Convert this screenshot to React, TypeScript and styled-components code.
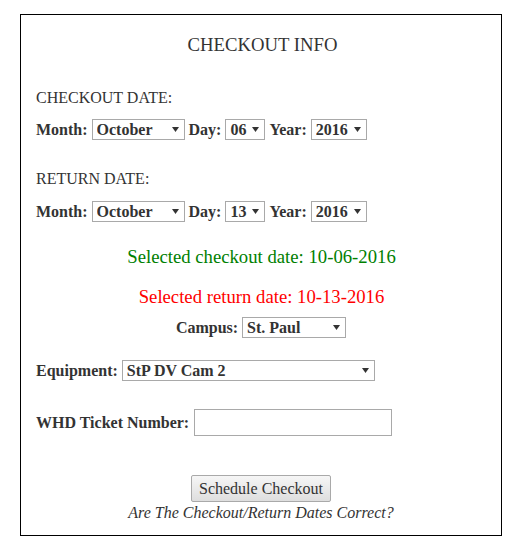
import React from "react";
import styled, { createGlobalStyle } from "styled-components";

const Global = createGlobalStyle`
  html, body { margin: 0; padding: 0; background: #fff; }
  body { font-family: "Liberation Serif", "Times New Roman", serif; color: #333; }
`;

const Box = styled.div`
  box-sizing: border-box;
  width: 482px;
  height: 522px;
  margin: 14px 0 0 20px;
  border: 1px solid #000;
  padding: 0 15px 13px;
  display: flex;
  flex-direction: column;
`;

const Title = styled.h3`
  margin: 19px 0 0;
  font-size: 18.72px;
  line-height: 22px;
  font-weight: normal;
  text-align: center;
  padding-left: 3px;
`;

const SectionLabel = styled.div<{ $mt: number }>`
  margin-top: ${(p) => p.$mt}px;
  font-size: 16px;
  line-height: 18px;
`;

const Row = styled.div<{ $mt: number; $center?: boolean }>`
  margin-top: ${(p) => p.$mt}px;
  display: flex;
  align-items: center;
  justify-content: ${(p) => (p.$center ? "center" : "flex-start")};
  gap: 4px;
  font-size: 16px;
`;

const Label = styled.label`
  font-weight: bold;
  font-size: 16px;
  line-height: 18px;
`;

const SelectWrap = styled.span<{ $w: number }>`
  position: relative;
  display: inline-block;
  width: ${(p) => p.$w}px;
  height: 21px;
`;

const Select = styled.select`
  appearance: none;
  -webkit-appearance: none;
  box-sizing: border-box;
  width: 100%;
  height: 21px;
  margin: 0;
  padding: 0 14px 0 4px;
  border: 1px solid #a9a9a9;
  border-radius: 0;
  background: #fff;
  color: #333;
  font-family: "Liberation Serif", "Times New Roman", serif;
  font-weight: bold;
  font-size: 16px;
  line-height: 19px;
  outline: none;
`;

const Arrow = styled.svg`
  position: absolute;
  right: 6px;
  top: 8px;
  width: 7px;
  height: 5px;
  pointer-events: none;
`;

const Message = styled.div<{ $mt: number; $color: string }>`
  margin-top: ${(p) => p.$mt}px;
  font-size: 18.72px;
  line-height: 22px;
  text-align: center;
  color: ${(p) => p.$color};
  padding-left: 1px;
`;

const TextInput = styled.input`
  box-sizing: border-box;
  width: 198px;
  height: 27px;
  margin: 0 0 0 1px;
  border: 1px solid #a9a9a9;
  padding: 1px 2px;
  font-size: 16px;
  font-family: "Liberation Serif", "Times New Roman", serif;
  outline: none;
`;

const Button = styled.button`
  box-sizing: border-box;
  width: 140px;
  height: 27px;
  margin: 0;
  padding: 0;
  border: 1px solid #a9a9a9;
  border-radius: 2px;
  background: linear-gradient(#f6f6f6, #dedede);
  color: #333;
  font-family: "Liberation Serif", "Times New Roman", serif;
  font-size: 16px;
  line-height: 25px;
`;

const Note = styled.div`
  margin-top: 2px;
  font-size: 16px;
  line-height: 18px;
  font-style: italic;
  text-align: center;
`;

function Dropdown({ w, value, options }: { w: number; value: string; options: string[] }) {
  return (
    <SelectWrap $w={w}>
      <Select defaultValue={value}>
        {options.map((o) => (
          <option key={o} value={o}>
            {o}
          </option>
        ))}
      </Select>
      <Arrow viewBox="0 0 7 5">
        <path d="M0 0 H7 L3.5 5 Z" fill="#333" />
      </Arrow>
    </SelectWrap>
  );
}

const months = [
  "January", "February", "March", "April", "May", "June",
  "July", "August", "September", "October", "November", "December",
];
const days = Array.from({ length: 31 }, (_, i) => String(i + 1).padStart(2, "0"));
const years = ["2016", "2017"];

function DateRow({ mt, day }: { mt: number; day: string }) {
  return (
    <Row $mt={mt}>
      <Label>Month:</Label>
      <Dropdown w={93} value="October" options={months} />
      <Label>Day:</Label>
      <Dropdown w={40} value={day} options={days} />
      <Label>Year:</Label>
      <Dropdown w={56} value="2016" options={years} />
    </Row>
  );
}

export default function App() {
  return (
    <>
      <Global />
      <Box>
        <Title>CHECKOUT INFO</Title>
        <SectionLabel $mt={33}>CHECKOUT DATE:</SectionLabel>
        <DateRow mt={12} day="06" />
        <SectionLabel $mt={30}>RETURN DATE:</SectionLabel>
        <DateRow mt={13} day="13" />
        <Message $mt={24} $color="#008000">Selected checkout date: 10-06-2016</Message>
        <Message $mt={18} $color="#ff0000">Selected return date: 10-13-2016</Message>
        <Row $mt={9} $center>
          <Label>Campus:</Label>
          <Dropdown w={104} value="St. Paul" options={["St. Paul", "Minneapolis"]} />
        </Row>
        <Row $mt={22}>
          <Label>Equipment:</Label>
          <Dropdown w={253} value="StP DV Cam 2" options={["StP DV Cam 1", "StP DV Cam 2"]} />
        </Row>
        <Row $mt={28}>
          <Label>WHD Ticket Number:</Label>
          <TextInput type="text" />
        </Row>
        <Row $mt={39} $center>
          <Button>Schedule Checkout</Button>
        </Row>
        <Note>Are The Checkout/Return Dates Correct?</Note>
      </Box>
    </>
  );
}
